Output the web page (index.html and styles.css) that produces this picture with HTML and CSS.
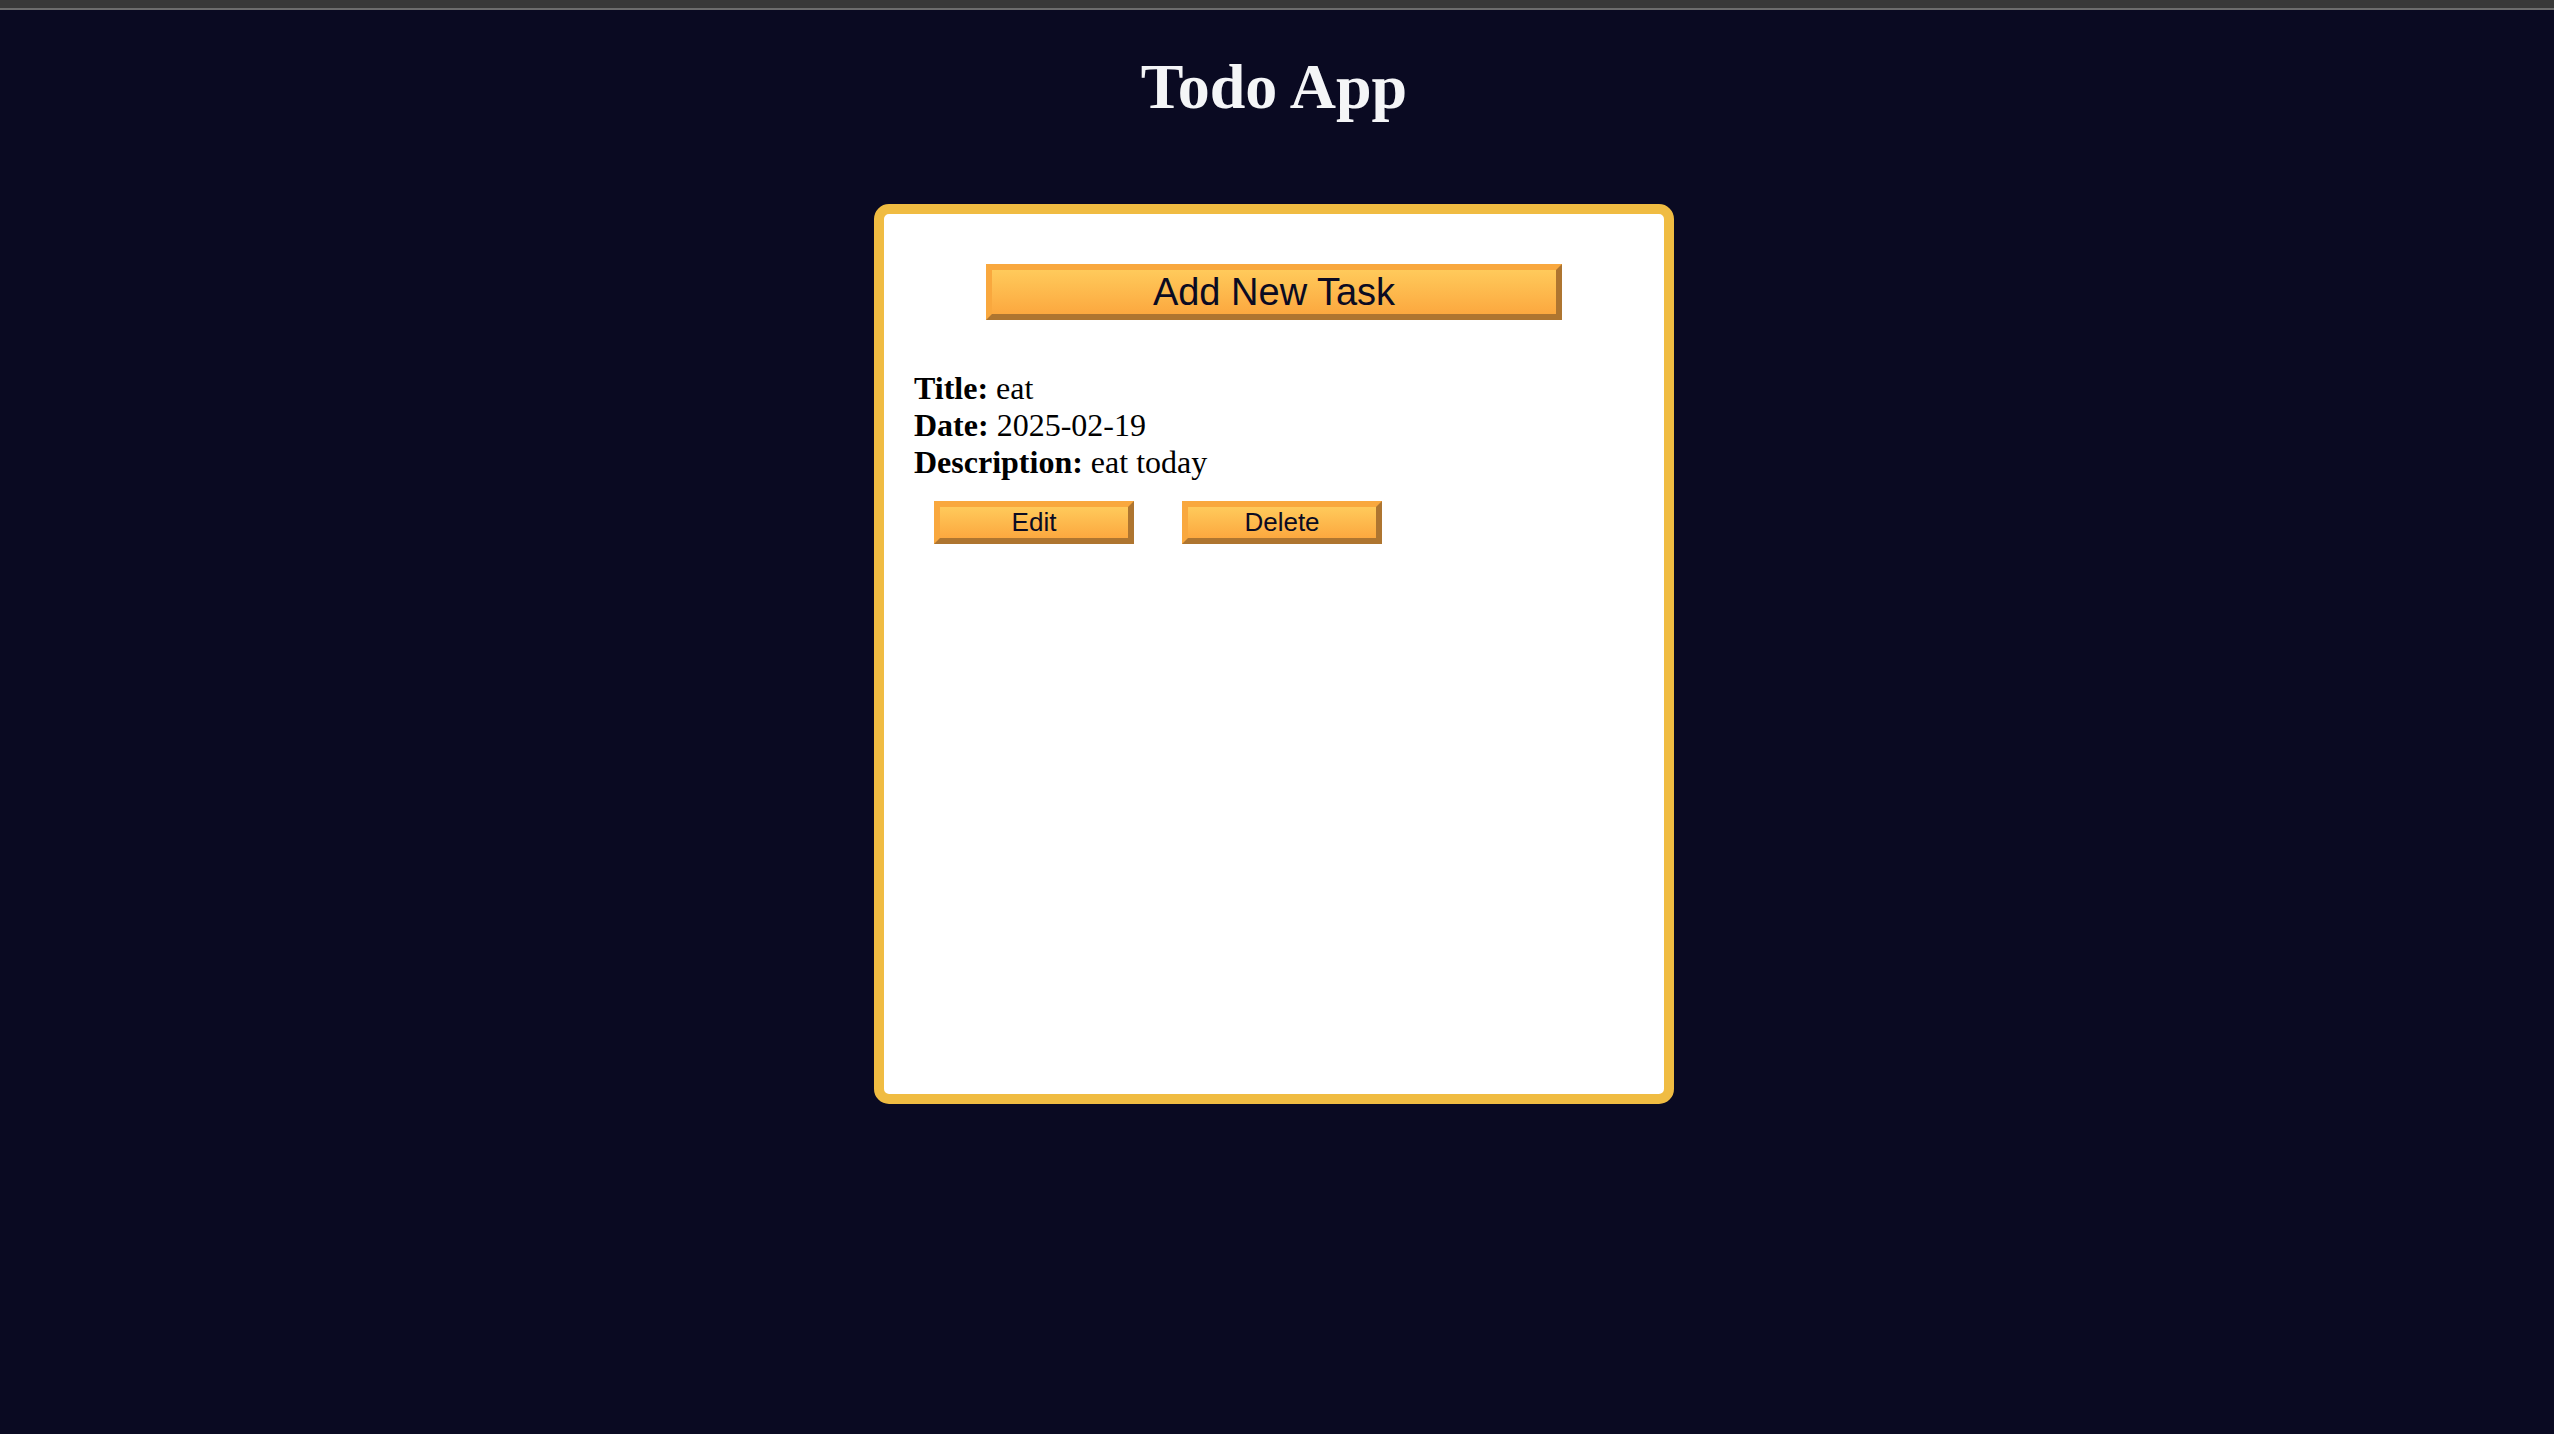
FILE: index.html
```html
<!DOCTYPE html>
<html lang="en">
<head>
<meta charset="utf-8">
<title>Todo App</title>
<link rel="stylesheet" href="styles.css">
</head>
<body>
<div class="topbar"></div>
<div class="page">
  <h1 class="title">Todo App</h1>
  <div class="card">
    <button class="btn add-btn">Add New Task</button>
    <div class="task">
      <p class="line"><strong>Title:</strong> eat</p>
      <p class="line"><strong>Date:</strong> 2025-02-19</p>
      <p class="line"><strong>Description:</strong> eat today</p>
      <div class="actions">
        <button class="btn small-btn">Edit</button>
        <button class="btn small-btn">Delete</button>
      </div>
    </div>
  </div>
</div>
</body>
</html>
```

FILE: styles.css
```css
html, body {
  margin: 0;
  padding: 0;
  background: #0a0a22;
}

body {
  font-family: "Liberation Serif", "Times New Roman", serif;
  min-height: 1434px;
}

.topbar {
  height: 8px;
  background: #383838;
  border-bottom: 2px solid #6c6c6c;
}

.page {
  padding-right: 6px;
}

.title {
  margin: 40px 0 0 0;
  font-size: 64px;
  line-height: 74px;
  font-weight: bold;
  color: #f4f5f7;
  text-align: center;
}

.card {
  box-sizing: border-box;
  width: 800px;
  height: 900px;
  margin: 80px auto 0 auto;
  background: #ffffff;
  border: 10px solid #f0bc42;
  border-radius: 15px;
  padding: 50px 30px;
}

.btn {
  box-sizing: border-box;
  font-family: "Liberation Sans", Arial, sans-serif;
  color: #0b0b22;
  background: linear-gradient(to bottom, #ffca5b, #fca83f);
  border-style: solid;
  border-width: 6px;
  border-color: #f9a83e #ae7530 #ae7530 #f9a83e;
  padding: 0;
  cursor: pointer;
}

.add-btn {
  display: block;
  width: 80%;
  height: 56px;
  margin: 0 auto;
  font-size: 38px;
}

.task {
  margin-top: 50px;
}

.line {
  margin: 0;
  font-size: 32px;
  color: #000000;
}

.actions {
  display: flex;
  gap: 48px;
  margin-top: 20px;
  padding-left: 20px;
}

.small-btn {
  width: 200px;
  height: 43px;
  font-size: 26px;
}
```
